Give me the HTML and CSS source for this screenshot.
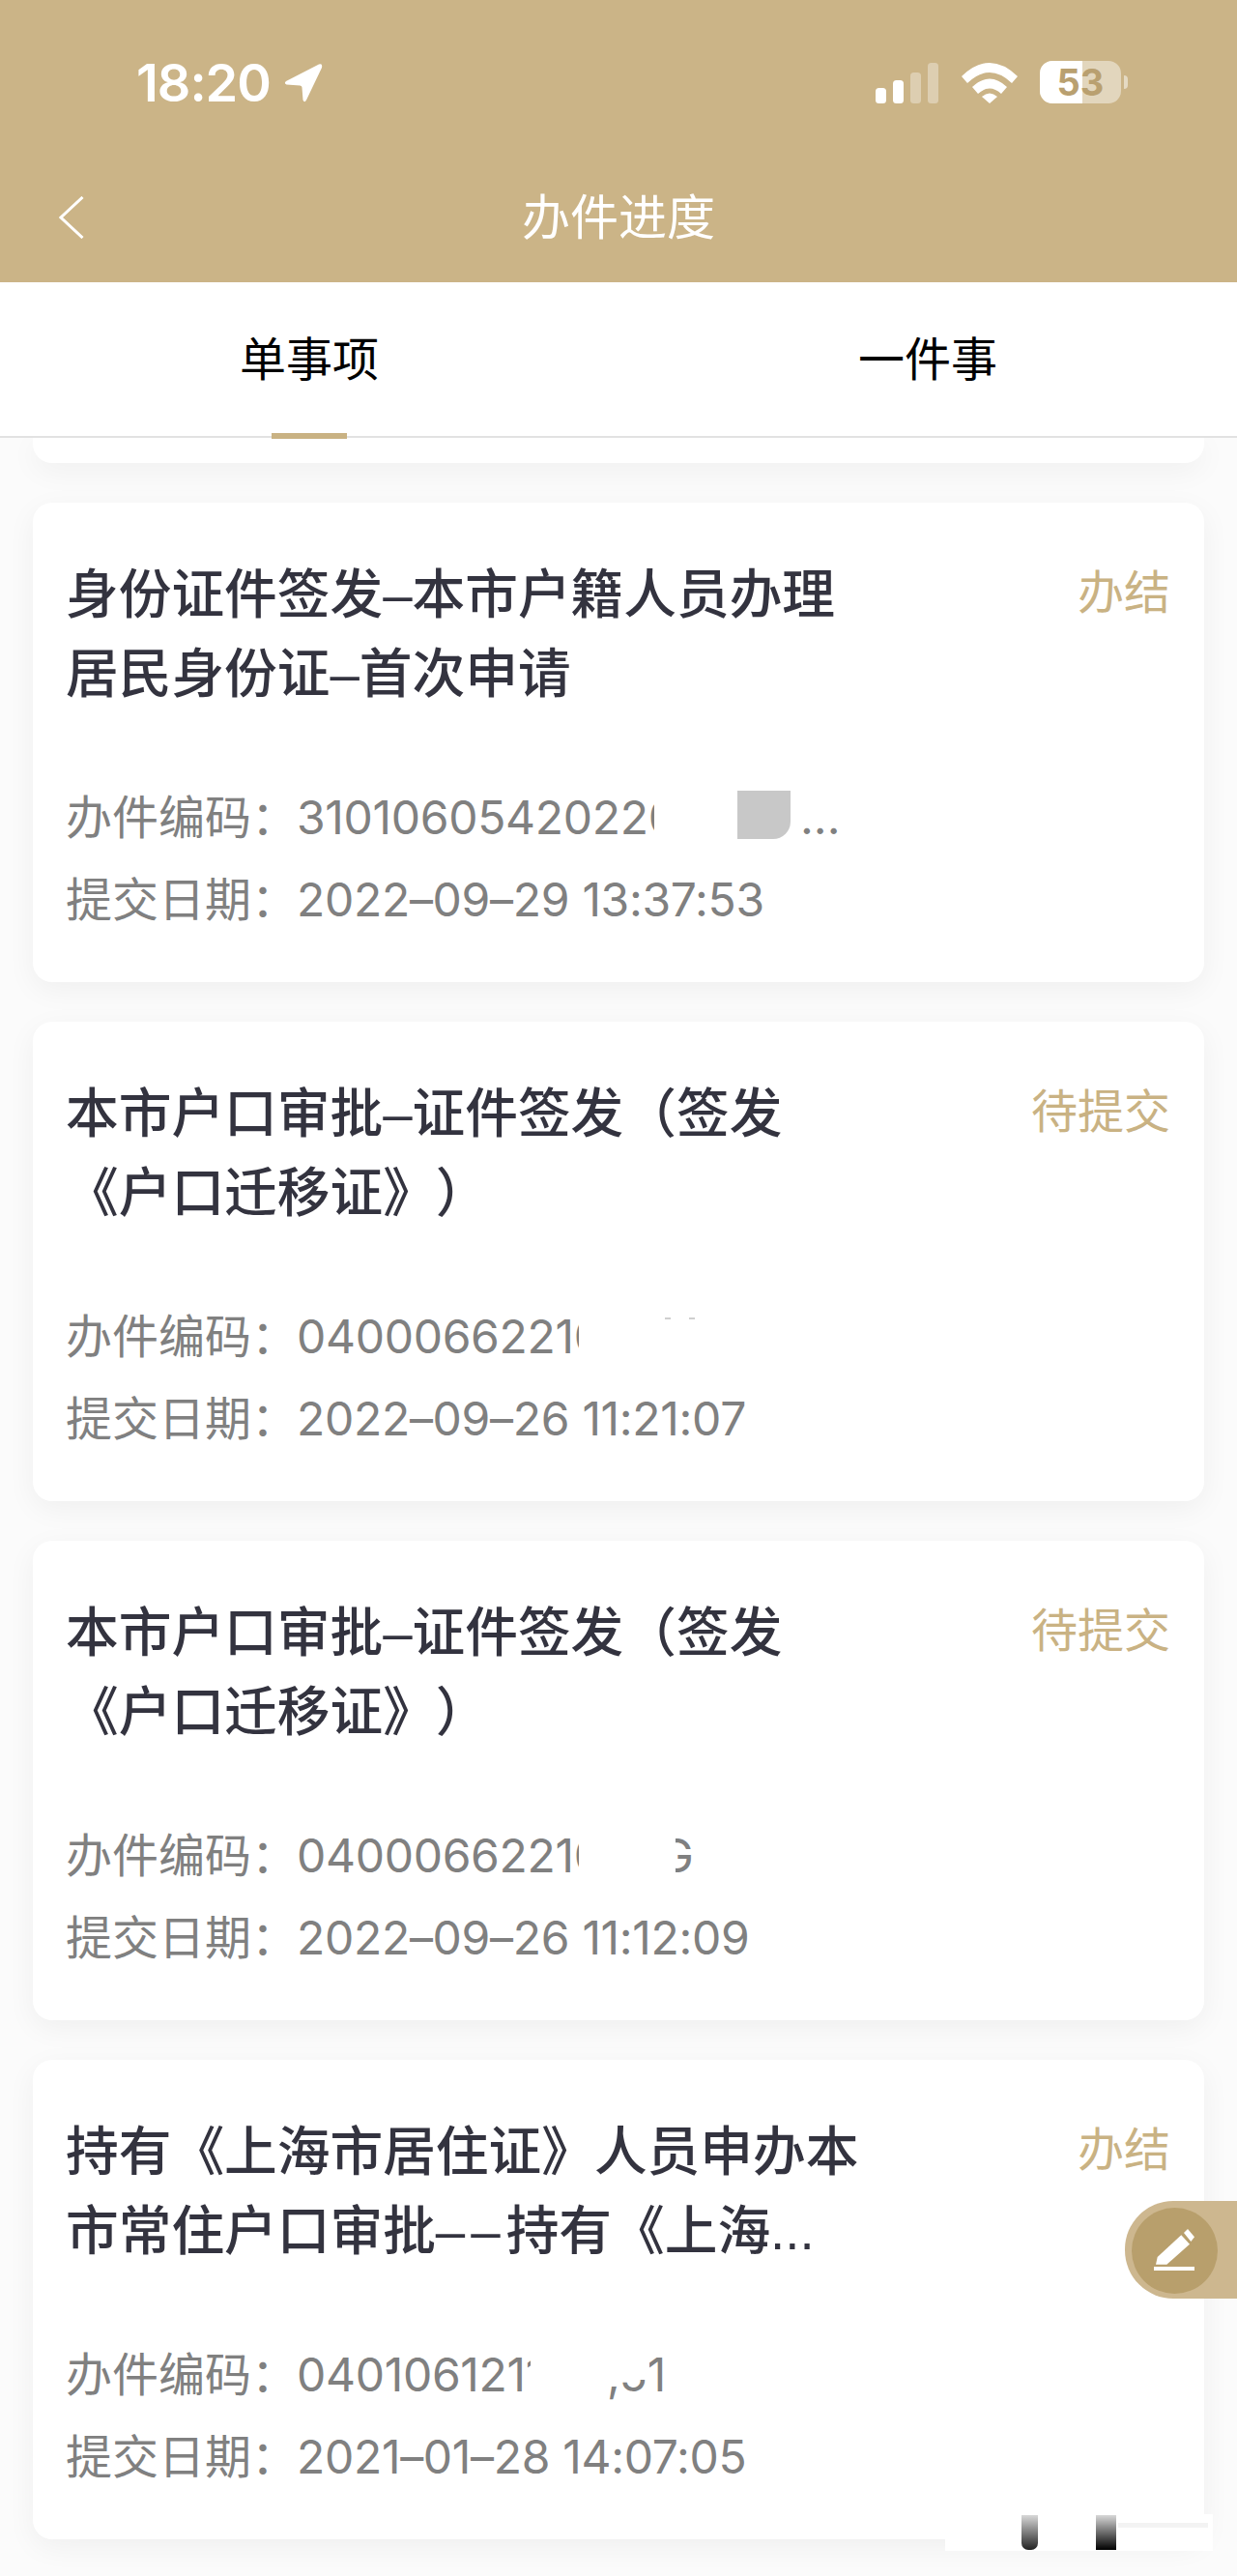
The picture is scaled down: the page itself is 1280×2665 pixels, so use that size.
FILE: index.html
```html
<!DOCTYPE html>
<html lang="zh-CN">
<head>
    <meta charset="UTF-8">
    <meta name="viewport" content="width=device-width, initial-scale=1.0">
    <title>办件进度</title>
    <link rel="stylesheet" href="styles.css">
</head>
<body>
    <div class="app">
        <header class="top">
            <div class="status-bar">
                <div class="clock">
                    <span class="time">18:20</span>
                    <svg class="arrow" width="40" height="42" viewBox="0 0 40 42">
                        <path d="M36 1.5 L2 19 Q-.5 21 2.500 22.500 L16.500 23.500 Q18.500 23.800 18.500 25.500 L19.500 38.500 Q21 42 23 38.500 L39 5 Q40 0 36 1.500 Z" fill="#fff"/>
                    </svg>
                </div>
                <div class="indicators">
                    <svg class="signal" width="66" height="42" viewBox="0 0 66 42">
                        <rect x="0" y="26" width="11" height="16" rx="3.500" fill="#fff"/>
                        <rect x="18" y="18" width="11" height="24" rx="3.500" fill="#fff"/>
                        <rect x="36" y="10" width="11" height="32" rx="3.500" fill="#fff" opacity=".35"/>
                        <rect x="54" y="0" width="11" height="42" rx="3.500" fill="#fff" opacity=".35"/>
                    </svg>
                    <svg class="wifi" width="58" height="42" viewBox="0 0 58 42">
                        <path d="M0 14 Q29 -14 58 14 L52 21 Q29 -1 6 21 Z" fill="#fff"/>
                        <path d="M11 25 Q29 8 47 25 L41 32 Q29 21 17 32 Z" fill="#fff"/>
                        <path d="M21 35 Q29 28 37 35 L29 42 Z" fill="#fff"/>
                    </svg>
                    <div class="battery">
                        <div class="battery-body"><span class="battery-fill"></span><span class="battery-num">53</span></div>
                        <span class="battery-cap"></span>
                    </div>
                </div>
            </div>
            <div class="nav">
                <svg class="back" width="26" height="44" viewBox="0 0 26 44">
                    <path d="M24.500 1 L2 22 L24.500 43" fill="none" stroke="#fff" stroke-width="3"/>
                </svg>
                <h1>办件进度</h1>
            </div>
        </header>

        <nav class="tabs">
            <div class="tab active">单事项</div>
            <div class="tab">一件事</div>
        </nav>

        <main class="list">
            <div class="card-end"></div>

            <section class="card">
                <div class="card-head">
                    <div class="card-title">身份证件签发–本市户籍人员办理<br>居民身份证–首次申请</div>
                    <div class="state">办结</div>
                </div>
                <div class="meta">
                    <span class="meta-label">办件编码：</span><span class="code cut-a">31010605420220</span><span class="smudge"></span><span class="dots">...</span>
                </div>
                <div class="meta"><span class="meta-label">提交日期：</span><span class="num">2022–09–29 13:37:53</span></div>
            </section>

            <section class="card">
                <div class="card-head">
                    <div class="card-title">本市户口审批–证件签发（签发<br>《户口迁移证》）</div>
                    <div class="state">待提交</div>
                </div>
                <div class="meta">
                    <span class="meta-label">办件编码：</span><span class="code cut-b">04000662210</span><span class="speck speck-a"></span><span class="speck speck-b"></span>
                </div>
                <div class="meta"><span class="meta-label">提交日期：</span><span class="num">2022–09–26 11:21:07</span></div>
            </section>

            <section class="card">
                <div class="card-head">
                    <div class="card-title">本市户口审批–证件签发（签发<br>《户口迁移证》）</div>
                    <div class="state">待提交</div>
                </div>
                <div class="meta">
                    <span class="meta-label">办件编码：</span><span class="code cut-c">04000662210</span><span class="code scrap-c">G</span>
                </div>
                <div class="meta"><span class="meta-label">提交日期：</span><span class="num">2022–09–26 11:12:09</span></div>
            </section>

            <section class="card">
                <div class="card-head">
                    <div class="card-title">持有《上海市居住证》人员申办本<br>市常住户口审批<span class="dashes">––</span>持有《上海...</div>
                    <div class="state">办结</div>
                </div>
                <div class="meta">
                    <span class="meta-label">办件编码：</span><span class="code cut-d">04010612112</span><span class="code scrap-d">,51</span>
                </div>
                <div class="meta"><span class="meta-label">提交日期：</span><span class="num">2021–01–28 14:07:05</span></div>
            </section>
        </main>

        <div class="fab">
            <svg class="fab-btn" width="89" height="89" viewBox="0 0 89 89">
                <circle cx="44.500" cy="44.500" r="44.500" fill="#b89f6c"/>
                <path d="M25 58.700 L26.700 51 L51.300 28.300 L60 37.700 L36.300 58.700 Z" fill="#fff"/>
                <path d="M54 26 L58 22 L65 30.300 L61.300 35 Z" fill="#fff"/>
                <rect x="23" y="61" width="42" height="4" fill="#fff"/>
            </svg>
        </div>

        <div class="mark">
            <span class="mark-bar bar-one"></span>
            <span class="mark-bar bar-two"></span>
            <span class="mark-line"></span>
        </div>
    </div>
</body>
</html>
```

FILE: styles.css
```css
* {
    margin: 0;
    padding: 0;
    box-sizing: border-box;
}

body {
    background: #fafafa;
    font-family: Inter, 'Noto Sans CJK SC', sans-serif;
    text-spacing-trim: space-all;
}

.app {
    position: relative;
    width: 1280px;
    height: 2665px;
    overflow: hidden;
    background: #fbfbfb;
}

/* header */
.top {
    height: 292px;
    background: #cbb487;
    color: #fff;
}

.status-bar {
    height: 172px;
    padding: 58px 113px 0 141px;
    display: flex;
    justify-content: space-between;
    align-items: flex-start;
}

.clock {
    display: flex;
    align-items: center;
    gap: 14px;
    height: 56px;
}

.time {
    font-size: 54px;
    font-weight: 600;
    letter-spacing: -1px;
    line-height: 56px;
}

.indicators {
    display: flex;
    align-items: flex-start;
    padding-top: 7px;
}

.signal {
    margin-right: 23px;
}

.wifi {
    margin-right: 23px;
}

.battery {
    display: flex;
    align-items: center;
    gap: 3px;
    margin-top: -2px;
}

.battery-body {
    position: relative;
    width: 84px;
    height: 44px;
    border-radius: 13px;
    overflow: hidden;
    background: rgba(255, 255, 255, 0.45);
    text-align: center;
}

.battery-fill {
    position: absolute;
    left: 0;
    top: 0;
    bottom: 0;
    width: 44px;
    background: #fff;
}

.battery-num {
    position: relative;
    font-size: 38px;
    font-weight: 700;
    line-height: 44px;
    color: #b9a070;
}

.battery-cap {
    width: 4px;
    height: 14px;
    border-radius: 0 4px 4px 0;
    background: rgba(255, 255, 255, 0.5);
}

.nav {
    position: relative;
    height: 120px;
    text-align: center;
}

.nav h1 {
    font-size: 50px;
    font-weight: 400;
    line-height: 106px;
}

.back {
    position: absolute;
    left: 61px;
    top: 31px;
}

/* tabs */
.tabs {
    position: relative;
    z-index: 2;
    height: 161px;
    display: grid;
    grid-template-columns: 1fr 1fr;
    background: #fff;
    border-bottom: 2px solid #e2e2e2;
}

.tab {
    position: relative;
    font-size: 48px;
    line-height: 160px;
    text-align: center;
    color: #000;
}

.tab.active::after {
    content: '';
    position: absolute;
    left: 281px;
    bottom: -2px;
    width: 78px;
    height: 6px;
    background: #c9b283;
}

/* cards */
.list {
    padding: 0 34px;
    display: flex;
    flex-direction: column;
    gap: 41px;
}

.card-end {
    height: 26px;
    background: #fff;
    border-radius: 0 0 20px 20px;
    box-shadow: 0 8px 30px rgba(0, 0, 0, 0.05);
}

.card {
    height: 496px;
    padding: 54px 35px 0 34px;
    background: #fff;
    border-radius: 20px;
    box-shadow: 0 8px 30px rgba(0, 0, 0, 0.05);
}

.card-head {
    display: flex;
    justify-content: space-between;
    margin-bottom: 65px;
}

.card-title {
    font-family: 'Liberation Sans', 'Noto Sans CJK SC', sans-serif;
    font-size: 54.7px;
    font-weight: 500;
    line-height: 82px;
    color: #33333f;
}

.dashes {
    letter-spacing: 6px;
}

.state {
    margin-top: -2px;
    font-size: 48px;
    line-height: 82px;
    color: #c9b283;
    white-space: nowrap;
}

.meta {
    display: flex;
    height: 85px;
    font-size: 48px;
    line-height: 85px;
    color: #808080;
    white-space: nowrap;
}

.meta-label {
    width: 239px;
}

.code,
.num {
    letter-spacing: -0.3px;
}

.code {
    display: block;
    overflow: hidden;
}

.cut-a { width: 370px; }
.cut-b { width: 292px; }
.cut-c { width: 292px; }
.cut-d { width: 242px; }

/* right half of a letter left by the blur */
.scrap-c {
    width: 18px;
    margin-left: 100px;
    text-indent: -17px;
}

.scrap-d {
    position: relative;
    width: 64px;
    margin-left: 79px;
}

.scrap-d::before {
    content: '';
    position: absolute;
    left: 10px;
    top: 0;
    width: 34px;
    height: 48px;
    background: #fff;
}

.smudge {
    width: 55px;
    height: 50px;
    margin: 15px 0 0 86px;
    background: #c8c8c8;
    border-radius: 0 0 18px 0;
}

.dots {
    margin-left: 10px;
}

.speck {
    width: 6px;
    height: 2px;
    margin-top: 23px;
    background: #cfcfcf;
}

.speck-a {
    margin-left: 89px;
}

.speck-b {
    margin-left: 19px;
}

/* floating button */
.fab {
    position: absolute;
    left: 1164px;
    top: 2277px;
    width: 116px;
    height: 101px;
    padding: 7px 0 0 7px;
    background: #cdb78f;
    border-radius: 50px 0 0 50px;
}

.fab-btn {
    display: block;
}

/* watermark strip bottom right */
.mark {
    position: absolute;
    left: 978px;
    top: 2601px;
    width: 277px;
    height: 38px;
    background: #fff;
}

.mark-bar {
    position: absolute;
    top: 1px;
    bottom: 1px;
    background: linear-gradient(#d8d8d8, #000);
}

.bar-one {
    left: 79px;
    width: 17px;
    border-radius: 0 0 7px 7px;
    background: linear-gradient(#d8d8d8, #222);
}

.bar-two {
    left: 156px;
    width: 21px;
}

.mark-line {
    position: absolute;
    left: 179px;
    top: 9px;
    width: 93px;
    height: 5px;
    background: #f3f3f3;
}
```
